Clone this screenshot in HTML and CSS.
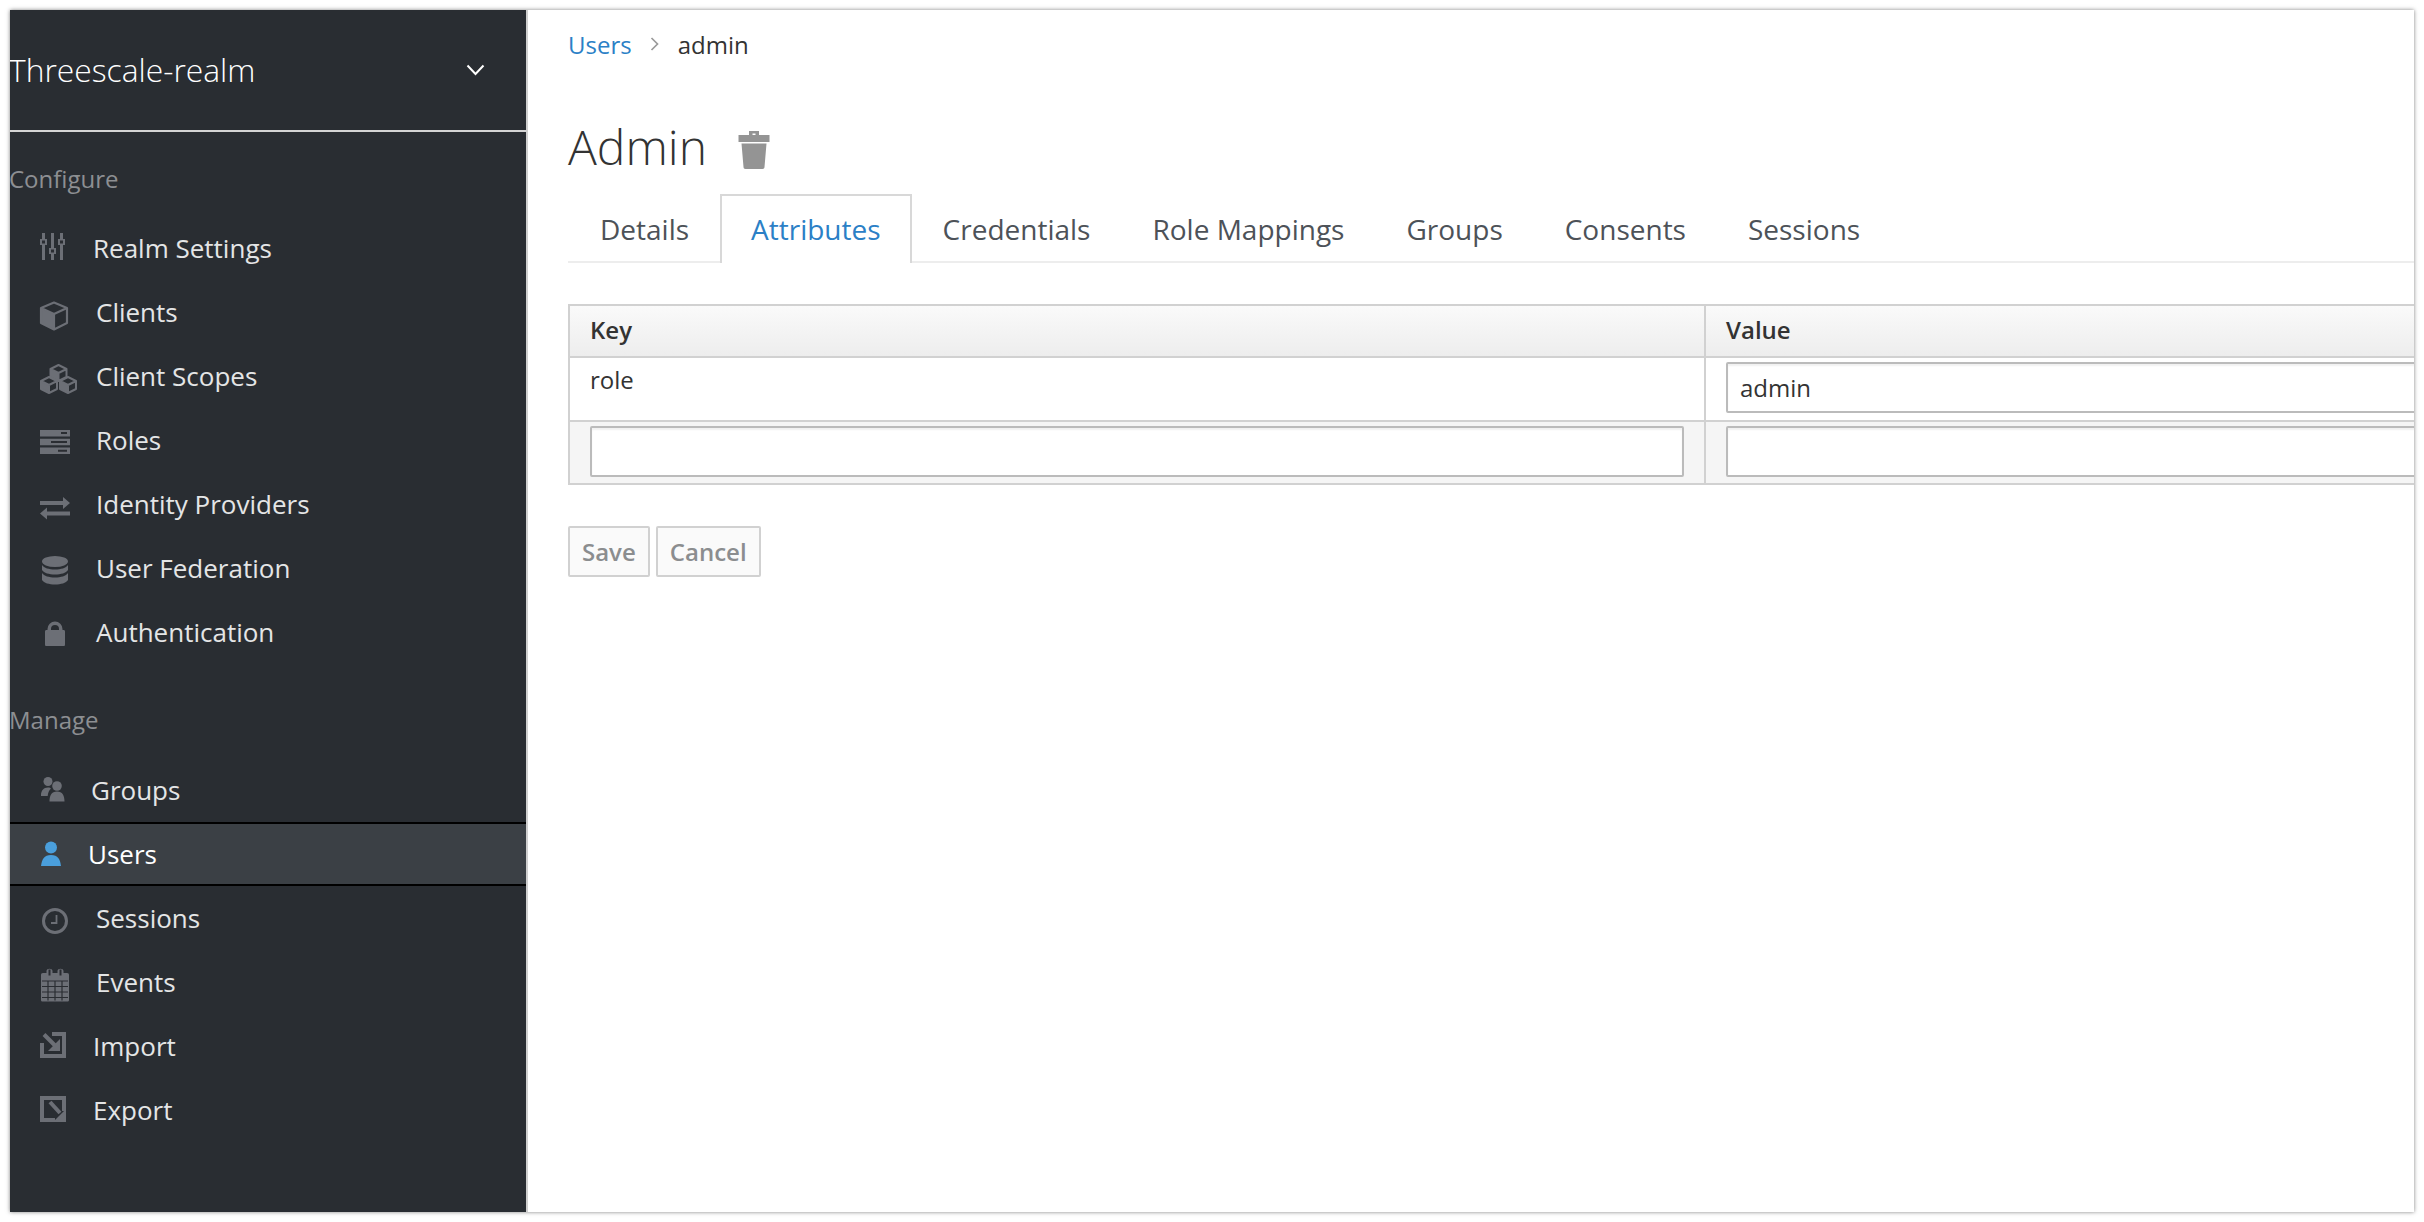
FILE: index.html
```html
<!DOCTYPE html>
<html lang="en">
<head>
<meta charset="utf-8">
<title>Admin</title>
<link rel="stylesheet" href="styles.css">
</head>
<body>
<div class="window">
  <aside class="sidebar">
    <div class="realm">
      <span class="realm-name">Threescale-realm</span>
      <svg class="realm-caret" width="19" height="12" viewBox="0 0 19 12"><path d="M1.500 1.500 9.500 10 17.500 1.500" fill="none" stroke="#fff" stroke-width="2"/></svg>
    </div>
    <h2 class="nav-title nav-title--first">Configure</h2>
    <ul class="nav">
      <li class="nav-item"><svg class="ico" viewBox="0 0 40 40"><path d="M2 5h3v6h2v6H5v15H2V17H0v-6h2zM11 5h3v15h2v6h-2v6h-3v-6H9v-6h2zM20 5h3v6h2v6h-2v15h-3V17h-2v-6h2z" fill="#6c6f76"/><path d="M2 12.500h3v3H2zM11 21.500h3v3h-3zM20 12.500h3v3h-3z" fill="#2a2d32"/></svg><span class="label label--a">Realm Settings</span></li>
      <li class="nav-item"><svg class="ico" viewBox="0 0 40 40"><path d="M1 16.500 14 22v15L1 31z" fill="#6c6f76"/><path d="M14 10.500 27 16v15l-13 6.500L1 31V16zM1 16l13 6 13-6M14 22v15" fill="none" stroke="#6c6f76" stroke-width="2.200" stroke-linejoin="round"/></svg><span class="label">Clients</span></li>
      <li class="nav-item"><svg class="ico" viewBox="0 0 40 40"><g transform="translate(0 6)"><path d="M1 19 9 22.500v8L1 27z" fill="#6c6f76"/><path d="M9 15 17 19v8l-8 4-8-4v-8zM1 19l8 4 8-4M9 23v8" fill="none" stroke="#6c6f76" stroke-width="2" stroke-linejoin="round"/><path d="M28 15 36 19v8l-8 4-8-4v-8zM20 19l8 4 8-4M28 23v8" fill="none" stroke="#6c6f76" stroke-width="2" stroke-linejoin="round"/><path d="M20 19 28 22.500v8L20 27z" fill="#6c6f76"/><path d="M18.500 3 26.500 7v8l-8 4-8-4V7zM10.500 7l8 4 8-4M18.500 11v8" fill="none" stroke="#6c6f76" stroke-width="2" stroke-linejoin="round"/><path d="M10.500 7 18.500 10.500v8l-8-4z" fill="#6c6f76"/></g></svg><span class="label">Client Scopes</span></li>
      <li class="nav-item"><svg class="ico" viewBox="0 0 40 40"><path d="M0 10h30v6.500H0zM0 18.700h30v6.500H0zM0 27.400h30v6.500H0z" fill="#6c6f76"/><path d="M21 12h6v2h-6zM11 21h16v2H11zM18 29.700h9v2h-9z" fill="#2a2d32"/></svg><span class="label">Roles</span></li>
      <li class="nav-item"><svg class="ico" viewBox="0 0 40 40"><path d="M0 17h23v-4l7 6-7 6v-4H0zM30 27.500H7v-4l-7 6 7 6v-4h23z" fill="#6c6f76"/></svg><span class="label">Identity Providers</span></li>
      <li class="nav-item"><svg class="ico" viewBox="0 0 40 40"><ellipse cx="15" cy="13.500" rx="13" ry="5.500" fill="#6c6f76"/><path d="M2 17c2 3 7 4.500 13 4.500s11-1.500 13-4.500v5c-2 3-7 4.500-13 4.500S4 25 2 22zM2 25c2 3 7 4.500 13 4.500s11-1.500 13-4.500v7c-2 3-7 4.500-13 4.500S4 35 2 32z" fill="#6c6f76"/></svg><span class="label">User Federation</span></li>
      <li class="nav-item"><svg class="ico" viewBox="0 0 40 40"><path d="M7.500 18v-1a7.500 7.500 0 0 1 15 0v1h1c1 0 1.500.6 1.500 1.500v13c0 1-.5 1.500-1.500 1.500h-17c-1 0-1.500-.5-1.500-1.500v-13c0-.9.5-1.500 1.500-1.500zm3.500 0h8v-1a4 4 0 0 0-8 0z" fill="#6c6f76" fill-rule="evenodd"/></svg><span class="label label--c">Authentication</span></li>
    </ul>
    <h2 class="nav-title nav-title--second">Manage</h2>
    <ul class="nav">
      <li class="nav-item"><svg class="ico" viewBox="0 0 40 40"><circle cx="8" cy="11.500" r="4.500" fill="#6c6f76"/><circle cx="17" cy="16" r="4.800" fill="#6c6f76"/><path d="M1 25c0-4 2.500-7.500 7-7.500 1.500 0 2.500.5 3 1-2 2-3 4-3.300 7.500H1zM9.500 31.500c0-6 2-10 7.500-10s7.500 4 7.500 10z" fill="#6c6f76"/></svg><span class="label label--g">Groups</span></li>
      <li class="nav-item nav-item--active"><svg class="ico" viewBox="0 0 40 40"><circle cx="11" cy="13.500" r="6" fill="#4a9fdc"/><path d="M1 32c1-7 3-11 10-11s9 4 10 11z" fill="#4a9fdc"/></svg><span class="label label--u">Users</span></li>
      <li class="nav-item"><svg class="ico" viewBox="0 0 40 40"><circle cx="15" cy="23" r="11.500" fill="none" stroke="#6c6f76" stroke-width="3"/><path d="M16.500 17v8H11" fill="none" stroke="#6c6f76" stroke-width="1.800"/></svg><span class="label">Sessions</span></li>
      <li class="nav-item"><svg class="ico" viewBox="0 0 40 40"><g transform="translate(0 3.500)"><path d="M3 7.500h3.500V5.500c0-3 6-3 6 0v2h5v-2c0-3 6-3 6 0v2H27c1.500 0 2 .7 2 2v25c0 1-.5 1.500-2 1.500H3c-1.500 0-2-.5-2-1.500v-25c0-1.300.5-2 2-2z" fill="#6c6f76"/><path d="M8.500 4h2v6h-2zM19.500 4h2v6h-2z" fill="#2a2d32"/><path d="M2 15.500h26M2 21h26M2 26.500h26M2 32h26M8 15v20M15 15v20M22 15v20" stroke="#2a2d32" stroke-width="1.200" fill="none"/></g></svg><span class="label label--e">Events</span></li>
      <li class="nav-item"><svg class="ico" viewBox="0 0 40 40"><path d="M12 6h14v26H0V17h4v11h18V10H12z" fill="#6c6f76"/><path d="M4 8.500 15 19.500" stroke="#6c6f76" stroke-width="4" fill="none"/><path d="M20 13v12H8z" fill="#6c6f76"/></svg><span class="label label--a">Import</span></li>
      <li class="nav-item"><svg class="ico" viewBox="0 0 40 40"><path d="M0 6h26v15h-4V10H4v18h11v4H0z" fill="#6c6f76"/><path d="M10 12 20 23" stroke="#6c6f76" stroke-width="4" fill="none"/><path d="M26 19v13H13z" fill="#6c6f76"/></svg><span class="label label--a">Export</span></li>
    </ul>
  </aside>
  <main class="main">
    <nav class="crumbs"><a class="link">Users</a><svg class="crumb-sep" width="9" height="14" viewBox="0 0 9 14"><path d="M1.500 1 7.500 7 1.500 13" fill="none" stroke="#9a9a9a" stroke-width="1.700"/></svg><span>admin</span></nav>
    <div class="page-head">
      <h1 class="page-title">Admin</h1>
      <svg class="trash" width="32" height="38" viewBox="0 0 32 38"><path d="M11 4V0h10v4h10.500v7H.5V4zm3.500 0h3V2.500h-3z" fill="#949494" fill-rule="evenodd"/><path d="M3.500 12.500h25L26.500 36c0 1-.7 2-2 2h-17c-1.300 0-2-1-2-2z" fill="#949494"/></svg>
    </div>
    <ul class="tabs">
      <li class="tab">Details</li>
      <li class="tab tab--active">Attributes</li>
      <li class="tab">Credentials</li>
      <li class="tab">Role Mappings</li>
      <li class="tab">Groups</li>
      <li class="tab">Consents</li>
      <li class="tab">Sessions</li>
    </ul>
    <table class="attrs">
      <thead>
        <tr><th class="col-key">Key</th><th>Value</th></tr>
      </thead>
      <tbody>
        <tr><td class="cell-text">role</td><td class="cell-input"><input class="field" type="text" value="admin"></td></tr>
        <tr class="row-new"><td class="cell-input"><input class="field" type="text"></td><td class="cell-input"><input class="field" type="text"></td></tr>
      </tbody>
    </table>
    <div class="actions">
      <button class="btn" type="button">Save</button>
      <button class="btn" type="button">Cancel</button>
    </div>
  </main>
</div>
</body>
</html>
```
FILE: styles.css
```css
* { box-sizing: border-box; }
html, body { margin: 0; height: 100%; background: #fff; overflow: hidden; }
body { font-family: "Open Sans", "Liberation Sans", sans-serif; padding: 10px; }
ul { list-style: none; margin: 0; padding: 0; }
h1, h2 { margin: 0; font-weight: 400; }

.window { display: flex; width: 2404px; height: 1202px; overflow: hidden; box-shadow: 0 0 4px rgba(0, 0, 0, .5); background: #fff; }

.sidebar { width: 516px; flex: none; background: #292d32; color: #e4e5e6; }
.realm { display: flex; align-items: center; justify-content: space-between; height: 122px; padding: 0 41px 1px 0; border-bottom: 2px solid #d4d4d4; color: #fff; }
.realm-name { margin-left: -1px; font-size: 31.800px; font-weight: 300; line-height: 40px; }
.nav-title { margin-left: -1px; font-size: 24px; line-height: 36px; color: #8d8f92; }
.nav-title--first { margin-top: 29px; margin-bottom: 19px; }
.nav-title--second { margin-top: 38px; margin-bottom: 20px; }
.nav-item { display: flex; align-items: center; height: 64px; padding-left: 30px; font-size: 26px; }
.nav-item--active { background: #3b4045; border-top: 2px solid #000; border-bottom: 2px solid #000; color: #fff; }
.ico { width: 40px; height: 40px; flex: none; overflow: visible; }
.label { margin-left: 16px; }
.label--a { margin-left: 13px; }
.label--c { margin-left: 16px; }
.label--g { margin-left: 11px; }
.label--u { margin-left: 8px; }
.label--e { margin-left: 16px; }

.main { flex: 1; min-width: 0; overflow: hidden; border-left: 2px solid #cfcfcf; padding: 0 0 0 40px; color: #333; }
.crumbs { display: flex; align-items: center; gap: 18.500px; height: 68px; font-size: 24px; }
.link { color: #2b80c6; }
.page-head { display: flex; align-items: center; gap: 31px; height: 116px; padding-top: 22px; }
.page-title { font-size: 48px; font-weight: 300; line-height: 60px; color: #333; }
.trash { flex: none; margin-top: 6px; }
.tabs { display: flex; height: 69px; padding-left: 1px; border-bottom: 2px solid #ededed; width: 2000px; }
.tab { height: 69px; padding: 14px 29px 0; font-size: 28px; line-height: 38px; color: #4d5258; border: 2px solid transparent; border-bottom: 0; }
.tab--active { color: #2b80c6; background: #fff; border-color: #d8d8d8; }

.attrs { width: 2000px; margin-top: 41px; border-collapse: collapse; table-layout: fixed; font-size: 24px; color: #333; }
.attrs th, .attrs td { border: 2px solid #d1d1d1; padding: 0 20px; }
.attrs th { height: 52px; padding-bottom: 3px; text-align: left; font-weight: 600; background: linear-gradient(#fafafa, #ededed); }
.col-key { width: 1136px; }
.attrs .cell-text { vertical-align: top; padding-top: 6px; height: 64px; line-height: 32px; }
.attrs .cell-input { height: 63px; padding-top: 4px; vertical-align: top; }
.row-new td { background: #f5f5f5; }
.field { display: block; width: 100%; height: 51px; padding: 0 12px; border: 2px solid #bbb; border-radius: 2px; background: #fff; box-shadow: inset 0 2px 2px rgba(3, 3, 3, .06); font: inherit; color: #333; }

.actions { display: flex; gap: 6px; margin-top: 41px; }
.btn { height: 51px; padding: 0 12px; border: 2px solid #d1d1d1; border-radius: 2px; background: #fafafa; color: #8b8d8f; font: 600 24px "Open Sans", sans-serif; }
```
